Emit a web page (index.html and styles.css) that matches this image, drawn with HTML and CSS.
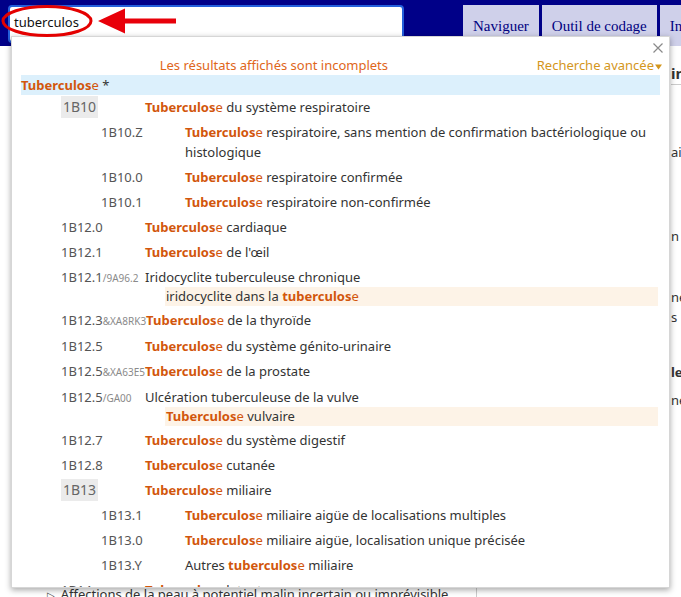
FILE: index.html
```html
<!DOCTYPE html>
<html lang="fr">
<head>
<meta charset="utf-8">
<title>CIM-11 recherche</title>
<link rel="stylesheet" href="styles.css">
</head>
<body>
<header class="topbar">
  <div class="search"><span class="search-text">tuberculos</span></div>
  <nav class="tabs">
    <a class="tab">Naviguer</a>
    <a class="tab">Outil de codage</a>
    <a class="tab">Info</a>
  </nav>
</header>

<main class="page">
  <section class="tree">
    <div class="tree-item"><span class="tri">▷</span>Affections de la peau à potentiel malin incertain ou imprévisible</div>
  </section>
  <aside class="detail">
    <h2 class="detail-title">in</h2>
    <p class="d1">ai</p>
    <p class="d2">n c</p>
    <p class="d3">ne<br>s</p>
    <p class="d4"><b>le</b></p>
    <p class="d5">ne</p>
  </aside>
</main>

<div class="popup">
  <svg class="close" width="10" height="10" viewBox="0 0 10 10"><path d="M0.5 0.5L9.5 9.5M9.5 0.5L0.5 9.5" stroke="#8a8a8a" stroke-width="1.2" fill="none"/></svg>
  <div class="popup-head">
    <span class="warn">Les résultats affichés sont incomplets</span>
    <span class="adv">Recherche avancée<svg class="caret" width="7" height="6" viewBox="0 0 7 6"><path d="M0 0.5H7L3.5 5.5Z" fill="#d4961c"/></svg></span>
  </div>
  <div class="results">
    <div class="top-row"><b class="hl">Tuberculos</b><span class="hle">e</span> *</div>

    <div class="entry l1 chiprow"><span class="code"><span class="chip">1B10</span></span><span class="desc"><b class="hl">Tuberculos</b><span class="hle">e</span> du système respiratoire</span></div>
    <div class="entry l2"><span class="code">1B10.Z</span><span class="desc"><b class="hl">Tuberculos</b><span class="hle">e</span> respiratoire, sans mention de confirmation bactériologique ou histologique</span></div>
    <div class="entry l2"><span class="code">1B10.0</span><span class="desc"><b class="hl">Tuberculos</b><span class="hle">e</span> respiratoire confirmée</span></div>
    <div class="entry l2"><span class="code">1B10.1</span><span class="desc"><b class="hl">Tuberculos</b><span class="hle">e</span> respiratoire non-confirmée</span></div>
    <div class="entry l1"><span class="code">1B12.0</span><span class="desc"><b class="hl">Tuberculos</b><span class="hle">e</span> cardiaque</span></div>
    <div class="entry l1"><span class="code">1B12.1</span><span class="desc"><b class="hl">Tuberculos</b><span class="hle">e</span> de l'œil</span></div>
    <div class="entry l1 with-sub"><span class="code">1B12.1<small>/9A96.2</small></span><span class="desc">Iridocyclite tuberculeuse chronique<span class="sub">iridocyclite dans la <b class="hl">tuberculos</b><span class="hle">e</span></span></span></div>
    <div class="entry l1"><span class="code">1B12.3<small>&amp;XA8RK3</small></span><span class="desc"><b class="hl">Tuberculos</b><span class="hle">e</span> de la thyroïde</span></div>
    <div class="entry l1"><span class="code">1B12.5</span><span class="desc"><b class="hl">Tuberculos</b><span class="hle">e</span> du système génito-urinaire</span></div>
    <div class="entry l1"><span class="code">1B12.5<small>&amp;XA63E5</small></span><span class="desc"><b class="hl">Tuberculos</b><span class="hle">e</span> de la prostate</span></div>
    <div class="entry l1 with-sub"><span class="code">1B12.5<small>/GA00</small></span><span class="desc">Ulcération tuberculeuse de la vulve<span class="sub"><b class="hl">Tuberculos</b><span class="hle">e</span> vulvaire</span></span></div>
    <div class="entry l1"><span class="code">1B12.7</span><span class="desc"><b class="hl">Tuberculos</b><span class="hle">e</span> du système digestif</span></div>
    <div class="entry l1"><span class="code">1B12.8</span><span class="desc"><b class="hl">Tuberculos</b><span class="hle">e</span> cutanée</span></div>
    <div class="entry l1 chiprow"><span class="code"><span class="chip">1B13</span></span><span class="desc"><b class="hl">Tuberculos</b><span class="hle">e</span> miliaire</span></div>
    <div class="entry l2"><span class="code">1B13.1</span><span class="desc"><b class="hl">Tuberculos</b><span class="hle">e</span> miliaire aigüe de localisations multiples</span></div>
    <div class="entry l2"><span class="code">1B13.0</span><span class="desc"><b class="hl">Tuberculos</b><span class="hle">e</span> miliaire aigüe, localisation unique précisée</span></div>
    <div class="entry l2"><span class="code">1B13.Y</span><span class="desc">Autres <b class="hl">tuberculos</b><span class="hle">e</span> miliaire</span></div>
    <div class="entry l1"><span class="code">1B14</span><span class="desc"><b class="hl">Tuberculos</b><span class="hle">e</span> latente</span></div>
    <div class="entry l1"><span class="code">1B1Y</span><span class="desc">Autres formes précisées de <b class="hl">tuberculos</b><span class="hle">e</span></span></div>
  </div>
</div>

<svg class="annot" width="180" height="42" viewBox="0 0 180 42">
  <ellipse cx="47" cy="21" rx="44" ry="14.5" fill="none" stroke="#e40000" stroke-width="3"/>
  <path d="M98 21L125 8.5V18.5H176V23.5H125V33.5Z" fill="#e8000a"/>
</svg>
</body>
</html>
```

FILE: styles.css
```css
* { box-sizing: border-box; }

html, body {
  margin: 0;
  padding: 0;
  background: #ffffff;
  width: 681px;
  height: 597px;
  overflow: hidden;
  font-family: "Noto Sans", "Open Sans", sans-serif;
  font-size: 13px;
  color: #333333;
}

/* ---------- header ---------- */
.topbar {
  height: 46px;
  background: #000088;
  display: flex;
  align-items: flex-start;
  padding: 5px 0 0 8px;
  overflow: hidden;
}

.search {
  flex: 0 0 396px;
  width: 396px;
  height: 38px;
  background: #ffffff;
  border: 2px solid #2460dc;
  border-radius: 4px;
  padding: 5px 0 0 4px;
  line-height: 20px;
  color: #111111;
  font-size: 13px;
}

.tabs {
  flex: 0 0 auto;
  display: flex;
  gap: 3px;
  margin-left: 59px;
  height: 41px;
}

.tab {
  flex: 0 0 auto;
  background: #cfd0ea;
  color: #000080;
  font-family: "Liberation Serif", "Times New Roman", serif;
  font-size: 15px;
  line-height: 20px;
  padding: 11px 10px 0;
  white-space: nowrap;
}

/* ---------- page behind ---------- */
.page {
  display: grid;
  grid-template-columns: 477px 1fr;
  height: 551px;
}

.tree {
  border-right: 1px solid #cccccc;
  padding-top: 538px;
}

.tree-item {
  padding-left: 47px;
  line-height: 20px;
  white-space: nowrap;
  color: #333333;
}

.tri {
  font-family: "DejaVu Sans", sans-serif;
  font-size: 10px;
  color: #555555;
  margin-right: 6px;
}

.detail {
  padding-left: 194px;
  white-space: nowrap;
  overflow: hidden;
}

.detail p { margin: 0; line-height: 20px; }

.detail-title {
  margin: 17px 0 0;
  font-size: 15px;
  line-height: 20px;
  font-weight: bold;
  padding-bottom: 1px;
  border-bottom: 1px solid #cccccc;
  color: #333333;
}

.d1 { margin-top: 57px !important; }
.d2 { margin-top: 64px !important; }
.d3 { margin-top: 41px !important; }
.d4 { margin-top: 35px !important; }
.d5 { margin-top: 8px !important; }

/* ---------- popup ---------- */
.popup {
  position: absolute;
  left: 11px;
  top: 36px;
  width: 659px;
  height: 552px;
  background: #ffffff;
  border: 1px solid #d6d6d6;
  box-shadow: 0 2px 6px rgba(0, 0, 0, 0.35);
  overflow: hidden;
}

.close {
  position: absolute;
  top: 6px;
  right: 6px;
}

.popup-head {
  display: flex;
  gap: 10px;
  padding: 19px 7px 0 9px;
  height: 38px;
  line-height: 19px;
}

.warn {
  flex: 1;
  text-align: center;
  color: #e0661a;
}

.adv {
  color: #d4961c;
  display: flex;
  align-items: center;
  gap: 1px;
}

.caret { margin-top: 2px; }

.results {
  padding: 0 9px;
}

.top-row {
  background: #dcf0fc;
  line-height: 20px;
  height: 20px;
}

.hl {
  color: #d2560c;
  font-weight: bold;
}

.hle { color: #d2560c; }

.entry {
  display: flex;
  align-items: flex-start;
  padding: 2px 0 3px;
  line-height: 20px;
}

.entry.l1 { padding-left: 40px; }
.entry.l2 { padding-left: 80px; }

.entry.with-sub { padding-bottom: 2px; }

.entry.chiprow {
  align-items: center;
  padding-top: 1px;
  padding-bottom: 2px;
}

.code {
  flex: 0 0 auto;
  min-width: 84px;
  color: #555555;
  white-space: nowrap;
}

.code small {
  font-size: 10px;
  color: #8a8a8a;
}

.chip {
  display: inline-block;
  background: #ebebeb;
  color: #666666;
  font-size: 14px;
  line-height: 22px;
  padding: 0 2px;
  vertical-align: top;
}

.desc {
  flex: 1;
  min-width: 0;
  color: #333333;
}

.sub {
  display: block;
  margin: 0 2px 0 20px;
  background: #fdf3e7;
  line-height: 19px;
  padding-left: 1px;
}

/* ---------- annotation ---------- */
.annot {
  position: absolute;
  left: 0;
  top: 0;
  pointer-events: none;
}
```
